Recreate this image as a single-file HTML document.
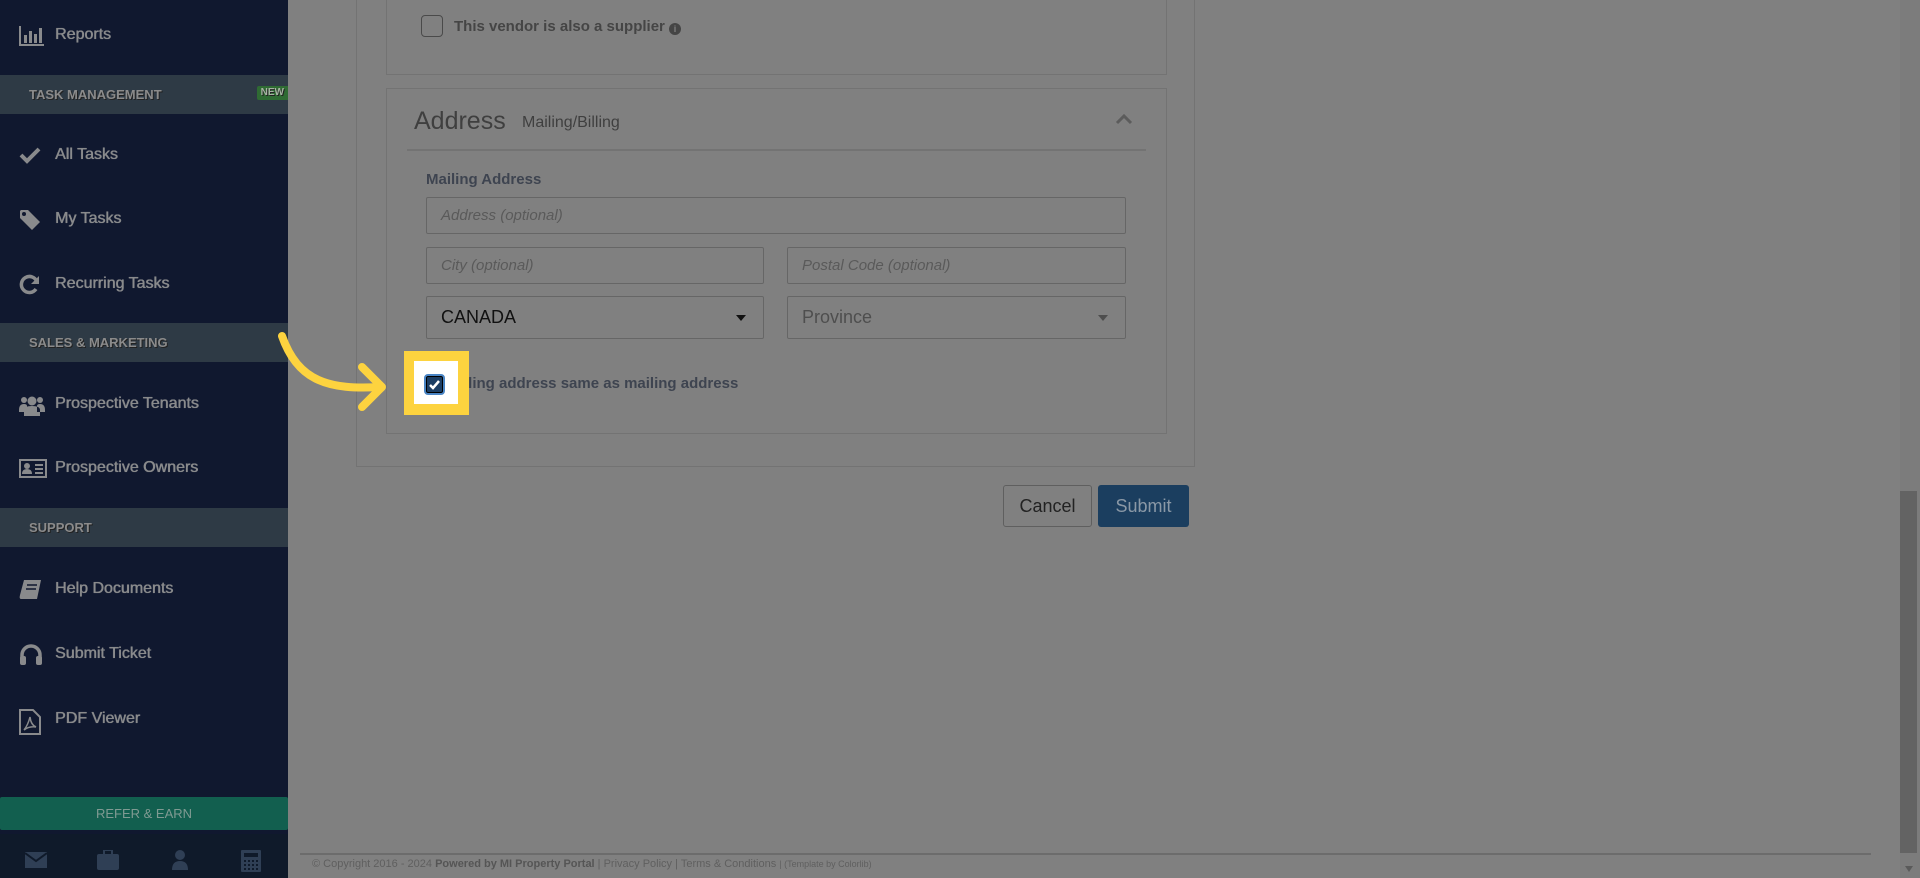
<!DOCTYPE html>
<html><head><meta charset="utf-8"><style>
*{box-sizing:border-box;margin:0;padding:0}
body{width:1920px;height:878px;overflow:hidden;background:#808080;font-family:"Liberation Sans",sans-serif;position:relative}
.sb{position:absolute;left:0;top:0;width:288px;height:878px;background:#10182f}
.it{position:absolute;left:0;width:288px;color:#898a8c;font-size:16px;text-shadow:0 0 0.6px #898a8c,0.4px 0 0 #898a8c}
.it svg{position:absolute;left:19px;top:-11px}
.it span{position:absolute;left:55px;top:-10px}
.hd{position:absolute;left:0;width:288px;height:39px;background:#2e3a45;color:#8b8b8b;font-weight:bold;font-size:13px;padding-left:29px;line-height:39px;text-shadow:1px 1px 0 #222}
.new{position:absolute;right:0;top:11px;background:#2f6b33;color:#a7b4a3;font-size:10px;line-height:14px;padding:0 4px;border-radius:2px 0 0 2px}
.nar{font-family:"Liberation Sans Narrow","Liberation Sans",sans-serif}
.box{position:absolute;border:1px solid #737373}
.inp{position:absolute;border:1px solid #666;border-radius:2px;color:#5a5a5a;font-style:italic;font-size:16px;padding-left:14px}
.lbl{position:absolute;color:#3e3e3e}
</style></head><body>
<div class="sb">
 <div class="it" style="top:36px"><svg width="26" height="22" viewBox="0 0 26 22"><path d="M1 1V20H25" stroke="#898a8c" stroke-width="2" fill="none"/><rect x="5" y="10" width="3" height="8" fill="#898a8c"/><rect x="10" y="6" width="3" height="12" fill="#898a8c"/><rect x="15" y="9" width="3" height="9" fill="#898a8c"/><rect x="20" y="3" width="3" height="15" fill="#898a8c"/></svg><span>Reports</span></div>
 <div class="hd" style="top:75px">TASK MANAGEMENT<span class="new">NEW</span></div>
 <div class="it" style="top:156px"><svg width="22" height="20" viewBox="0 0 22 20"><path d="M2 10L8 16L20 4" stroke="#898a8c" stroke-width="4" fill="none"/></svg><span>All Tasks</span></div>
 <div class="it" style="top:220px"><svg width="22" height="22" viewBox="0 0 22 22"><path d="M1 2V9L13 21L21 13L9 1H2Z" fill="#898a8c"/><circle cx="5" cy="5" r="2" fill="#10182f"/></svg><span>My Tasks</span></div>
 <div class="it" style="top:285px"><svg width="22" height="22" viewBox="0 0 22 22"><path d="M18 8A8 8 0 1 0 17 15" stroke="#898a8c" stroke-width="3.5" fill="none"/><path d="M20 2V10H12Z" fill="#898a8c"/></svg><span>Recurring Tasks</span></div>
 <div class="hd" style="top:323px">SALES &amp; MARKETING</div>
 <div class="it" style="top:405px"><svg width="26" height="24" viewBox="0 0 26 24"><circle cx="13" cy="7" r="4.5" fill="#898a8c"/><circle cx="5" cy="6" r="3" fill="#898a8c"/><circle cx="21" cy="6" r="3" fill="#898a8c"/><path d="M5 22V16Q5 12 13 12Q21 12 21 16V22Z M0 16Q0 10 5 10Q8 10 8 12V18H0Z M26 16Q26 10 21 10Q18 10 18 12V18H26Z" fill="#898a8c"/></svg><span>Prospective Tenants</span></div>
 <div class="it" style="top:469px"><svg width="28" height="22" viewBox="0 0 28 22"><rect x="1" y="2" width="26" height="17" fill="none" stroke="#898a8c" stroke-width="2"/><circle cx="8" cy="8" r="3" fill="#898a8c"/><path d="M3 16Q3 11 8 11Q13 11 13 16Z" fill="#898a8c"/><path d="M16 7H24M16 11H24M16 15H24" stroke="#898a8c" stroke-width="2"/></svg><span>Prospective Owners</span></div>
 <div class="hd" style="top:508px">SUPPORT</div>
 <div class="it" style="top:590px"><svg width="24" height="22" viewBox="0 0 24 22"><path d="M5 1H22L18 20H2Q0 20 1 16Z" fill="#898a8c"/><path d="M8 6H18M7 10H17" stroke="#10182f" stroke-width="1.5"/></svg><span>Help Documents</span></div>
 <div class="it" style="top:655px"><svg width="24" height="22" viewBox="0 0 24 22"><path d="M3 16V11A9 9 0 0 1 21 11V16" stroke="#898a8c" stroke-width="3.5" fill="none"/><rect x="1" y="12" width="6" height="9" rx="2" fill="#898a8c"/><rect x="17" y="12" width="6" height="9" rx="2" fill="#898a8c"/></svg><span>Submit Ticket</span></div>
 <div class="it" style="top:720px"><svg width="22" height="26" viewBox="0 0 22 26"><path d="M1 1H14L21 8V25H1Z" fill="none" stroke="#898a8c" stroke-width="2"/><path d="M5 21Q9 16 11 8Q12 16 17 18Q10 17 5 21" fill="none" stroke="#898a8c" stroke-width="1.5"/></svg><span>PDF Viewer</span></div>
 <div style="position:absolute;left:0;top:797px;width:288px;height:33px;background:#125f4f;color:#7f9a92;font-size:13px;text-align:center;line-height:33px;border-radius:2px">REFER &amp; EARN</div>
 <div style="position:absolute;left:0;top:834px;width:288px;height:44px;background:#0f1a2a"></div>
 <svg style="position:absolute;left:25px;top:852px" width="22" height="16"><path d="M0 0H22V16H0Z" fill="#2f3f55"/><path d="M0 1L11 9L22 1" stroke="#0f1a2a" stroke-width="2" fill="none"/></svg>
 <svg style="position:absolute;left:97px;top:850px" width="22" height="20"><rect x="0" y="4" width="22" height="16" rx="2" fill="#2f3f55"/><rect x="7" y="0" width="8" height="5" fill="none" stroke="#2f3f55" stroke-width="2"/></svg>
 <svg style="position:absolute;left:172px;top:850px" width="16" height="20"><circle cx="8" cy="5" r="5" fill="#2f3f55"/><path d="M0 20Q0 11 8 11Q16 11 16 20Z" fill="#2f3f55"/></svg>
 <svg style="position:absolute;left:241px;top:850px" width="20" height="22"><rect x="0" y="0" width="20" height="22" rx="1" fill="#2f3f55"/><rect x="3" y="3" width="14" height="4" fill="#0f1a2a"/><g fill="#0f1a2a"><rect x="3" y="10" width="2" height="2"/><rect x="7" y="10" width="2" height="2"/><rect x="11" y="10" width="2" height="2"/><rect x="15" y="10" width="2" height="2"/><rect x="3" y="14" width="2" height="2"/><rect x="7" y="14" width="2" height="2"/><rect x="11" y="14" width="2" height="2"/><rect x="15" y="14" width="2" height="2"/><rect x="3" y="18" width="2" height="2"/><rect x="7" y="18" width="2" height="2"/><rect x="11" y="18" width="2" height="2"/><rect x="15" y="18" width="2" height="2"/></g></svg>
</div>

<div class="box" style="left:356px;top:-5px;width:839px;height:472px"></div>
<div class="box" style="left:386px;top:-5px;width:781px;height:80px"></div>
<div style="position:absolute;left:421px;top:15px;width:22px;height:22px;border:1.5px solid #4a4a4a;border-radius:4px"></div>
<div class="lbl nar" style="left:454px;top:18px;font-size:15px;font-weight:bold;color:#454545">This vendor is also a supplier <span style="display:inline-block;width:12px;height:12px;background:#454545;border-radius:6px;vertical-align:-1px;color:#808080;font-size:9px;text-align:center;line-height:12px">i</span></div>

<div class="box" style="left:386px;top:88px;width:781px;height:346px"></div>
<div class="lbl nar" style="left:414px;top:107px;font-size:25px;color:#3f3f3f">Address</div>
<div class="lbl nar" style="left:522px;top:114px;font-size:16px;color:#3f3f3f">Mailing/Billing</div>
<svg style="position:absolute;left:1115px;top:113px" width="18" height="12"><path d="M2 10L9 3L16 10" stroke="#5c5c5c" stroke-width="3" fill="none"/></svg>
<div style="position:absolute;left:407px;top:149px;width:739px;height:2px;background:#737373"></div>
<div class="lbl nar" style="left:426px;top:171px;font-size:15px;font-weight:bold;color:#3e4450">Mailing Address</div>
<div class="inp nar" style="left:426px;top:197px;width:700px;height:37px;line-height:35px;font-size:15px">Address (optional)</div>
<div class="inp nar" style="left:426px;top:247px;width:338px;height:37px;line-height:35px;font-size:15px">City (optional)</div>
<div class="inp nar" style="left:787px;top:247px;width:339px;height:37px;line-height:35px;font-size:15px">Postal Code (optional)</div>
<div class="inp nar" style="left:426px;top:296px;width:338px;height:43px;line-height:41px;font-style:normal;color:#111;font-size:18px">CANADA<span style="position:absolute;right:17px;top:18px;border:5px solid transparent;border-top:6px solid #111"></span></div>
<div class="inp nar" style="left:787px;top:296px;width:339px;height:43px;line-height:41px;font-style:normal;color:#4e4e4e;font-size:18px">Province<span style="position:absolute;right:17px;top:18px;border:5px solid transparent;border-top:6px solid #4e4e4e"></span></div>
<div class="lbl nar" style="left:449px;top:375px;font-size:15px;font-weight:bold;color:#3e4450">Billing address same as mailing address</div>
<div style="position:absolute;left:404px;top:351px;width:65px;height:64px;background:#fdd33f"></div>
<div style="position:absolute;left:414px;top:361px;width:44px;height:43px;background:#fff"></div>
<div style="position:absolute;left:424px;top:374px;width:21px;height:21px;border:2px solid #4a85c5;border-radius:4px;background:#1b3d63;box-shadow:inset 0 0 0 1px #000"></div>
<svg style="position:absolute;left:427px;top:377px" width="15" height="15"><path d="M3 8L6 11L12 4" stroke="#fff" stroke-width="2.5" fill="none"/></svg>
<svg style="position:absolute;left:0;top:0" width="420" height="430"><path d="M282 336C298 382 330 390 380 387" stroke="#fdd33f" stroke-width="8" fill="none" stroke-linecap="round"/><path d="M362 367L382 387L362 407" stroke="#fdd33f" stroke-width="8" fill="none" stroke-linecap="round" stroke-linejoin="round"/></svg>

<div class="nar" style="position:absolute;left:1003px;top:485px;width:89px;height:42px;border:1px solid #5f5f5f;border-radius:3px;text-align:center;line-height:40px;font-size:18px;color:#222">Cancel</div>
<div class="nar" style="position:absolute;left:1098px;top:485px;width:91px;height:42px;background:#1b3e5f;border-radius:3px;text-align:center;line-height:42px;font-size:18px;color:#8a98a6">Submit</div>

<div style="position:absolute;left:300px;top:853px;width:1571px;height:2px;background:#6c6c6c"></div>
<div style="position:absolute;left:312px;top:858px;font-size:11px;color:#5f5f5f;white-space:nowrap">© Copyright 2016 - 2024 <b style="color:#555">Powered by MI Property Portal</b> | Privacy Policy | Terms &amp; Conditions <span style="font-size:9px">| (Template by Colorlib)</span></div>

<div style="position:absolute;left:1900px;top:0;width:20px;height:878px;background:#7c7c7c"></div>
<div style="position:absolute;left:1900px;top:491px;width:17px;height:362px;background:#636363"></div>
<div style="position:absolute;left:1905px;top:866px;border:4px solid transparent;border-top:6px solid #5a5a5a"></div>
</body></html>
